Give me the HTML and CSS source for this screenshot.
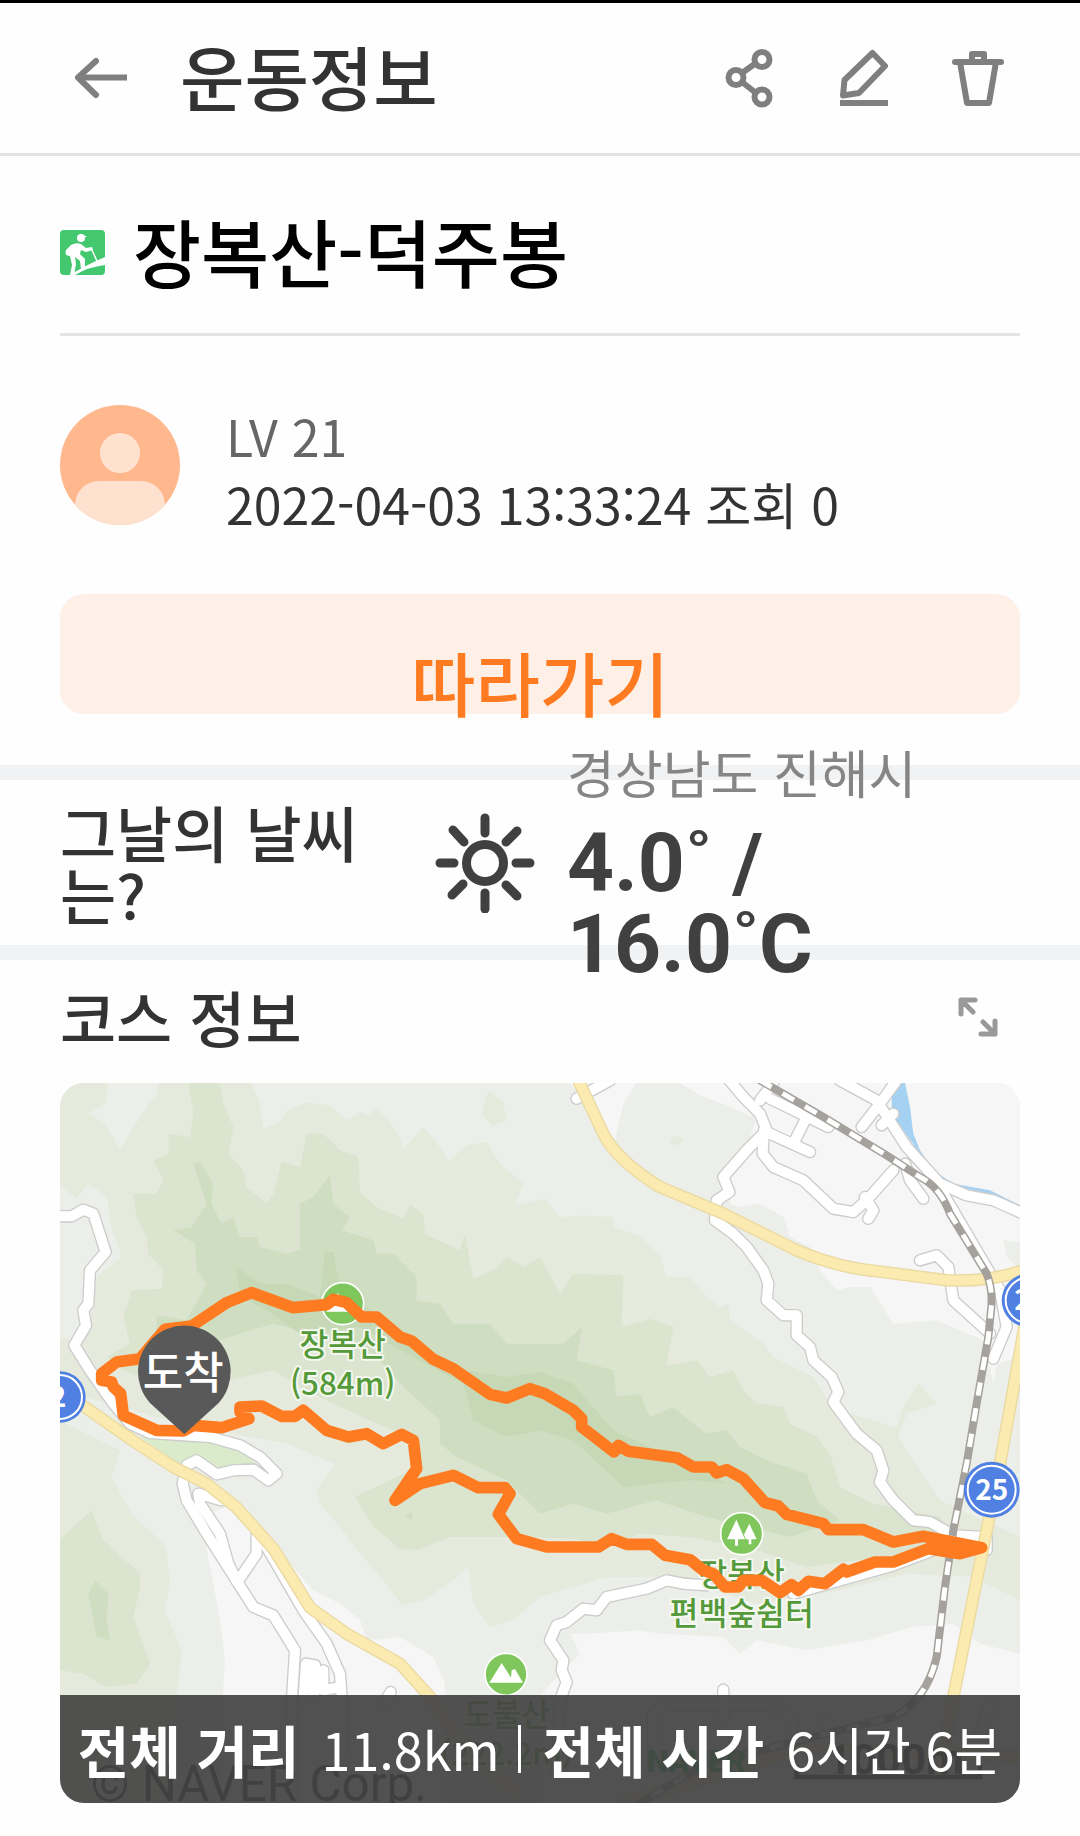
FILE: index.html
```html
<!DOCTYPE html>
<html lang="ko">
<head>
<meta charset="utf-8">
<meta name="viewport" content="width=device-width, initial-scale=1">
<title>운동정보</title>
<link rel="stylesheet" href="styles.css">
</head>
<body>
<header class="topbar">
  <button class="icon-button" type="button" aria-label="뒤로">
    <svg class="icon" viewBox="0 0 60 60"><path d="M24 13 6 29.500 24 47" stroke-linecap="round" stroke-linejoin="round"/><path d="M6 29.500H55"/></svg>
  </button>
  <h1 class="topbar-title">운동정보</h1>
  <div class="topbar-actions">
    <button class="icon-button" type="button" aria-label="공유">
      <svg class="icon" viewBox="0 0 60 60"><path d="M22 25 36 15M22 34 36 45"/><circle cx="16" cy="29.500" r="7.500"/><circle cx="42" cy="11.500" r="7.500"/><circle cx="42" cy="49" r="7.500"/></svg>
    </button>
    <button class="icon-button" type="button" aria-label="수정">
      <svg class="icon" viewBox="0 0 60 60"><path d="M38.500 5 51 18 25 45 9 47.500 10.500 32Z" stroke-linejoin="round"/><path d="M6 55H54"/></svg>
    </button>
    <button class="icon-button" type="button" aria-label="삭제">
      <svg class="icon" viewBox="0 0 60 60"><path d="M7 14H53" stroke-linecap="round"/><path d="M12 14 19 55H41L48 14M24 14V6H36V14" stroke-linejoin="round"/></svg>
    </button>
  </div>
</header>

<main>
  <section class="post">
    <div class="post-heading">
      <svg class="sport-icon" viewBox="0 0 45 45" aria-hidden="true">
        <rect width="45" height="45" rx="4" fill="#43c86f"/>
        <circle cx="21" cy="8" r="4" fill="#fff"/><path d="M20 4 27 6.500 24 8Z" fill="#fff"/>
        <path d="M11 15Q16 12 21 14L26 18 32 17 33 20 26 22 21 20 20 24 25 29 25 37 21 39 20 31 15 27 16 34 14 45 10 45 12 35 10 26Q4 26 6 20Z" fill="#fff"/>
        <path d="M31 18 37 31" stroke="#fff" stroke-width="1.500"/>
        <path d="M10 45Q24 36 45 27V35Q28 37 15 45Z" fill="#fff"/>
      </svg>
      <h2 class="post-title">장복산-덕주봉</h2>
    </div>
    <div class="author">
      <svg class="avatar" viewBox="0 0 120 120" aria-hidden="true">
        <defs><clipPath id="avatar-clip"><circle cx="60" cy="60" r="60"/></clipPath></defs>
        <g clip-path="url(#avatar-clip)"><rect width="120" height="120" fill="#ffb88d"/><circle cx="60" cy="48" r="20" fill="#ffe1cf"/><rect x="15" y="76" width="90" height="70" rx="24" fill="#ffe1cf"/></g>
      </svg>
      <div class="author-text">
        <p class="level">LV 21</p>
        <p class="meta">2022-04-03 13:33:24 조회 0</p>
      </div>
    </div>
    <button class="follow" type="button">따라가기</button>
  </section>

  <section class="weather">
    <h2 class="section-title weather-title">그날의 날씨는?</h2>
    <svg class="sun" viewBox="0 0 100 100" role="img" aria-label="맑음">
      <circle cx="50" cy="50" r="18.500"/>
      <path d="M50 5V20M50 80V96M5 50H19M81 50H95M18 17 29 29M82 18 71 29M17 82 28 71M82 83 71 72"/>
    </svg>
    <div class="forecast">
      <p class="place">경상남도 진해시</p>
      <p class="temperature">4.0˚ /<br>16.0˚C</p>
    </div>
  </section>

  <section class="course">
    <div class="course-head">
      <h2 class="section-title">코스 정보</h2>
      <button class="icon-button expand" type="button" aria-label="지도 확대">
        <svg class="icon-expand" viewBox="0 0 40 40"><path d="M3 17V3H17M3 3 15 15M37 24V37H23M37 37 25 25"/></svg>
      </button>
    </div>
    <div class="map">
      <svg class="map-art" viewBox="60 38 2880 2160" role="img" aria-label="코스 지도">
        <defs>
          <g id="streets">
            <path d="M40 438H95L130 418 160 430 197 545 150 600 145 700 130 720 138 765 103 825 150 900 220 1000 270 1060 330 1088 430 1095 510 1100 600 1125 660 1160 710 1210 685 1230 640 1198 580 1200 530 1212 470 1170 440 1185 428 1240 440 1290 500 1390 570 1500 640 1610 700 1635 765 1740 755 1900V2198"/>
            <path d="M545 1290 475 1270 480 1300 540 1390 565 1480 592 1535 650 1450V1390"/>
            <path d="M680 1430 790 1620 860 1720 900 1810 905 1880 905 2040M790 1890 798 1780 825 1785 822 1870 850 1800 850 1860 900 1850M1030 1900 1052 1865"/>
            <path d="M2060 20 2110 80 2160 130 2180 180 2120 240 2050 320 2068 365 2030 390 2025 450 2080 490 2120 530 2170 600 2185 640 2180 690 2230 735H2270V795L2310 830 2320 870 2375 920 2395 965 2380 995 2450 1090 2510 1140 2530 1200 2520 1235 2560 1290 2620 1350 2670 1355 2740 1395 2840 1400V1440"/>
            <path d="M2172 180 2168 250 2200 290 2290 330 2380 415 2440 425 2480 390 2560 300M2475 380 2500 420 2485 445M2190 190 2310 245M2265 210 2300 140M2190 85 2365 170M2160 90 2200 38"/>
            <path d="M2570 30 2520 100 2465 170M2400 30 2510 90 2600 230 2700 340 2780 375 2860 390 2950 430M2560 130 2525 165M2595 280 2610 330 2650 385M2710 370 2880 660 2900 770 2860 865M2640 570 2690 555 2725 590 2740 690 2850 790M1610 85 1710 30"/>
            <path d="M2000 1545 1930 1540 1880 1530 1820 1555 1700 1580 1670 1620 1630 1615 1580 1655 1550 1665 1530 1710 1570 1770 1565 1800 1580 1835 1560 1890 1550 2100M2260 1570 2400 1530 2560 1485 2680 1440M2050 1950V1858M1840 2100V1930L1880 1905H2200L2260 1960 2290 2090M2400 2100 2360 1950M2800 2050 2850 1900"/>
          </g>
          <g id="highways">
            <path d="M1610 20 1690 190Q1730 270 1860 350L2050 430 2270 540Q2400 595 2530 605L2720 630Q2850 635 2950 600"/>
            <path d="M120 1000 280 1112 400 1190 500 1240 590 1312 700 1435 810 1612 920 1690 1080 1780 1170 1880 1260 2010 1420 2160"/>
            <path d="M2955 760 2880 1180 2820 1480 2740 1880 2700 2110M1750 2198 2300 2030 2940 2060"/>
          </g>
        </defs>

        <!-- terrain -->
        <rect x="60" y="38" width="2880" height="2160" fill="#eceFe9"/>
        <path fill="#e6eadd" d="M60 38H205L195 100 145 130 190 155 220 200 240 240 275 180 320 110 350 70 355 38H635L660 100 670 175 720 155 740 120 800 97 870 105 920 150 960 125 985 135 1010 115 1050 155 1080 200 1090 235 1150 170 1190 215 1225 272 1280 225 1340 215 1380 280 1450 340 1425 405 1515 385 1560 440 1620 435 1720 440V470L1800 495 1860 555 1880 620 1950 620 2000 680 2040 710 2065 700 2070 750 2130 790 2170 820 2200 860 2320 920 2380 1010 2460 1040 2570 1070 2590 1010 2635 940 2690 1000 2600 1030 2575 1100 2620 1170 2700 1290 2940 1400V1590L2800 1520 2600 1510 2400 1560 2150 1600 1900 1520 1700 1520 1500 1580 1420 1650 1350 1670 1300 1600 1285 1490 1240 1530 1150 1590 1085 1605 1030 1530 960 1450 900 1370 840 1300 830 1260 885 1180 740 1120 420 1060 60 960Z"/>
        <path fill="#eceFe9" d="M60 345 110 385 145 340 200 380 215 480 245 560 170 620 160 720 100 810 60 800Z"/>
        <path fill="#e6eadd" d="M1345 60 1390 95 1400 150 1355 168 1325 130ZM1900 195 1930 205 1920 225 1890 220ZM60 1050 240 1140 215 1220 275 1330 380 1430 390 1540 375 1620 425 1740 410 1874 380 2198H60Z"/>
        <path fill="#dae4cf" d="M445 38H540L550 100 580 170 565 250 610 300 620 350 680 400 700 370 725 275 780 290 800 190 850 190 900 240 955 260 960 365 1010 410 1090 445 1110 405 1150 430 1155 490 1260 540 1275 490 1300 625 1360 600 1400 560 1450 590 1500 560 1560 670 1600 610 1750 615 1745 770 1830 745 1900 770 1880 885 1970 870 2010 920 2080 900 2110 960 2150 1000 2230 1010 2250 1060 2330 1100 2370 1150 2400 1250 2500 1300 2700 1340 2760 1430 2600 1450 2300 1490 2150 1440 1950 1400 1800 1390 1700 1430 1600 1405 1450 1400 1230 1400 1130 1440 1080 1435 1000 1370 945 1280 1050 1230 1130 1190 1100 1100 880 1000 780 950 700 900 560 930 400 960 250 900 200 860 270 820 250 740 275 660 365 655 370 600 325 550 320 500 290 440 280 370 350 370 370 330 340 270 385 250V190L450 200 460 130ZM60 1410 100 1370 155 1320 190 1410 300 1510V1550L280 1640 330 1780 290 1840 200 1850 130 1810 60 1800Z"/>
        <path fill="#cfdec1" d="M460 280 480 275 520 340 515 400 545 460 580 440 600 500 650 500 660 530 740 550 780 540V400L820 380 870 315 880 400 930 440 905 480 1000 510 1010 550 1060 550 1130 620V690L1200 700 1240 760 1350 760 1400 820 1500 820H1570L1625 770 1610 870 1720 900 1730 980 1800 970 1830 1040 1900 1010 1960 1060 2000 1090 2060 1080 2100 1130 2180 1170 2300 1210 2330 1290 2400 1350 2250 1400 2000 1340 1850 1290 1700 1330 1600 1300 1500 1330 1400 1230 1250 1160 1200 1120 1200 1050 1100 960 1000 850 850 800 700 760 600 790 480 830 350 790 350 735 440 750 500 640 470 600 465 520 400 480 455 470 500 400ZM145 1570 165 1530 205 1570 200 1650 210 1710 170 1700ZM1095 1340 1117 1325V1350Z"/>
        <path fill="#c6d8b6" d="M590 590 660 640 740 640 840 680 855 545H880L900 650 960 690 1050 780 1130 820 1280 900 1400 920 1500 905 1600 940 1650 1000 1720 1080 1850 1140 1950 1180 2060 1240 1950 1230 1750 1250 1600 1110 1500 1080 1400 1100 1300 1050 1270 940 1100 850 960 770 780 790 680 720 600 680Z"/>
        <path fill="#d9ebcb" d="M300 1100 430 1105 500 1098 600 1140 660 1190 600 1190 530 1205 470 1165 430 1190Z"/>
        <!-- built-up areas -->
        <path fill="#f6f6f6" d="M1590 38H1790L1750 100 1725 210 1680 150ZM1920 38 1980 75 2060 105 2150 145 2120 230 2050 310 2070 400 2100 410 2160 400 2230 440 2250 500 2310 530 2340 600 2390 660 2430 650 2490 650 2560 760 2690 750 2830 810 2860 940 2870 880 2940 860V38ZM1500 2198V1874L1620 1750 1590 1690 1640 1690 1800 1680 1860 1690 2050 1700 2100 1750 2150 1710 2300 1740 2480 1710 2620 1670 2740 1660 2820 1720 2940 1750V2198ZM480 1340 560 1310 680 1400 820 1560 900 1600 960 1650 980 1710 1080 1700 1180 1760 1215 1840 1210 2198H530L555 1770 540 1650 520 1540Z"/>
        <path fill="#eceFe9" d="M2890 510 2940 515V600L2900 560Z"/>
        <path fill="#a5d2f2" d="M2595 38H2585L2555 80V130L2640 250 2720 345 2800 360 2860 385 2940 420V405L2850 360 2740 340 2680 300 2640 240 2620 190 2610 110Z"/>

        <!-- roads -->
        <use href="#streets" class="line street-edge"/>
        <use href="#streets" class="line street"/>
        <use href="#highways" class="line highway-edge"/>
        <use href="#highways" class="line highway"/>
        <path class="line rail-edge" d="M2160 30 2350 140 2540 255 2640 320Q2700 350 2730 430L2840 610Q2860 660 2853 720L2845 800 2810 1000 2780 1180 2740 1380 2715 1550 2690 1760Q2660 1890 2560 1940L2400 1980 2000 2080 1800 2198"/>
        <path class="line rail" d="M2160 30 2350 140 2540 255 2640 320Q2700 350 2730 430L2840 610Q2860 660 2853 720L2845 800 2810 1000 2780 1180 2740 1380 2715 1550 2690 1760Q2660 1890 2560 1940L2400 1980 2000 2080 1800 2198"/>

        <!-- route number shields -->
        <g class="shield"><circle cx="60" cy="980" r="77"/><circle class="ring" cx="60" cy="980" r="66"/><text x="54" y="1010">2</text></g>
        <g class="shield"><circle cx="2965" cy="690" r="80"/><circle class="ring" cx="2965" cy="690" r="68"/><text x="2972" y="720">25</text></g>
        <g class="shield"><circle cx="2855" cy="1258" r="84"/><circle class="ring" cx="2855" cy="1258" r="72"/><text x="2855" y="1290">25</text></g>

        <!-- places -->
        <g class="place-dot">
          <circle cx="908" cy="700" r="63"/><path d="M858 724 893 668 918 700 928 688 958 724Z"/>
          <circle cx="1398" cy="1812" r="63"/><path d="M1348 1837 1385 1778 1413 1822 1415 1800 1425 1796 1449 1837Z"/>
          <circle cx="2105" cy="1390" r="63"/><path d="M2089 1348 2115 1407H2094V1426H2085V1407H2061ZM2128 1360 2150 1407H2134V1422H2126V1407H2118L2112 1393Z"/>
        </g>
        <g class="place-name">
          <text x="908" y="858">장복산</text><text x="908" y="974">(584m)</text>
          <text x="1400" y="1968">도불산</text><text x="1400" y="2084">(222.2m)</text>
          <text x="2105" y="1546">장복산</text><text x="2105" y="1664">편백숲쉼터</text>
        </g>
        <text class="copyright" x="152" y="2192">© NAVER Corp.</text>
        <text class="brand" x="1820" y="2106">NAVER</text>
        <text class="scale-text" x="2360" y="2110">1000m</text>
        <path d="M2270 2085V2120H2820V2085" fill="none" stroke="#111" stroke-width="14"/>

        <!-- recorded track -->
        <path class="line track" d="M430 1082 350 1080 250 1035 242 970 220 950 215 935 185 930V910L230 875 300 865 375 777 455 767 560 697 635 667 760 712 860 703 880 687 920 697 965 740H1010L1080 800 1115 812 1180 867 1240 895 1350 972 1400 983 1470 955 1515 970 1600 1020 1625 1045V1070L1722 1145 1735 1125 1765 1143 1910 1162 1960 1190H2015L2030 1208 2060 1198 2110 1225 2175 1297 2215 1307 2240 1332 2350 1360 2365 1378H2470L2560 1415 2650 1398 2825 1432 2760 1450 2665 1435 2560 1475H2505L2420 1505 2410 1497 2355 1540 2305 1533 2275 1560 2255 1543 2220 1567 2165 1530H2110L2095 1550H2055L2020 1510 1990 1500 1950 1468 1875 1455 1835 1422H1760L1715 1405 1675 1430H1520L1430 1405 1375 1332 1410 1270 1395 1252H1315L1240 1215 1140 1240 1065 1290 1130 1195 1120 1110 1085 1092 1030 1120 980 1090 925 1100 860 1080 790 1020 765 1038H725L665 1007 600 1010V1025L627 1045 545 1072 460 1065Z"/>
        <path d="M433 1092 330 998A139 139 0 1 1 536 998Z" fill="#595959"/>
        <text class="pin-text" x="430" y="955">도착</text>
      </svg>
      <dl class="summary">
        <div class="stat"><dt>전체 거리</dt><dd>11.8km</dd></div>
        <div class="stat"><dt>전체 시간</dt><dd>6시간 6분</dd></div>
      </dl>
    </div>
  </section>
</main>
</body>
</html>
```
FILE: styles.css
```css
* {
  box-sizing: border-box;
}

body {
  margin: 0;
  border-top: 3px solid #000;
  background: #fefefe;
  color: #333;
  font-family: "Noto Sans CJK KR", sans-serif;
}

h1,
h2,
p,
dl,
dd {
  margin: 0;
}

button {
  border: 0;
  padding: 0;
  background: none;
  font-family: inherit;
  cursor: pointer;
}

svg {
  display: block;
}

/* top bar */
.topbar {
  display: flex;
  align-items: center;
  gap: 48px;
  height: 153px;
  padding: 0 72px;
  border-bottom: 3px solid #e2e2e2;
}

.topbar-title {
  flex: 1;
  padding-bottom: 4px;
  font-size: 70px;
  font-weight: 500;
  line-height: 80px;
}

.topbar-actions {
  display: flex;
  gap: 54px;
}

.icon {
  width: 60px;
  height: 60px;
  fill: none;
  stroke: #7f7f7f;
  stroke-width: 6;
}

/* post */
.post {
  padding: 0 60px 51px;
}

.post-heading {
  display: flex;
  align-items: center;
  gap: 28px;
  height: 180px;
  padding-top: 16px;
  border-bottom: 3px solid #e4e4e4;
}

.sport-icon {
  width: 45px;
  height: 45px;
}

.post-title {
  padding-bottom: 6px;
  color: #000;
  font-size: 74px;
  font-weight: 500;
  line-height: 80px;
}

.author {
  display: flex;
  align-items: center;
  gap: 46px;
  height: 258px;
}

.avatar {
  width: 120px;
  height: 120px;
}

.author-text {
  padding-top: 8px;
  font-size: 50px;
  line-height: 68px;
}

.level {
  color: #666;
}

.follow {
  display: block;
  width: 100%;
  height: 120px;
  padding-top: 56px;
  border-radius: 24px;
  background: #fff0e7;
  color: #ff7b22;
  font-size: 70px;
  font-weight: 500;
  line-height: 64px;
}

.section-title {
  font-size: 61px;
  font-weight: 500;
  line-height: 62px;
}

/* weather */
.weather {
  display: flex;
  align-items: center;
  height: 195px;
  padding: 0 60px;
  border-top: 15px solid #f1f2f4;
  border-bottom: 15px solid #f1f2f4;
}

.weather-title {
  width: 320px;
  margin-right: 55px;
  word-break: break-all;
}

.sun {
  flex: none;
  width: 100px;
  height: 100px;
  margin-right: 32px;
  fill: none;
  stroke: #404040;
  stroke-width: 9;
  stroke-linecap: round;
}

.forecast {
  padding-bottom: 10px;
}

.place {
  margin-bottom: 10px;
  color: #858585;
  font-size: 52px;
  line-height: 82px;
}

.temperature {
  color: #404040;
  font-family: Roboto, sans-serif;
  font-size: 82px;
  font-weight: 700;
  line-height: 81px;
}

/* course */
.course {
  padding: 0 60px 34px;
}

.course-head {
  display: flex;
  align-items: center;
  justify-content: space-between;
  height: 123px;
  padding: 0 22px 10px 0;
}

.icon-expand {
  width: 40px;
  height: 40px;
  fill: none;
  stroke: #999;
  stroke-width: 5;
  stroke-linecap: round;
  stroke-linejoin: round;
}

.map {
  position: relative;
  overflow: hidden;
  border-radius: 24px;
}

.map-art {
  width: 100%;
}

.line {
  fill: none;
  stroke-linecap: round;
  stroke-linejoin: round;
}

.street-edge {
  stroke: #cccccc;
  stroke-width: 38;
}

.street {
  stroke: #fff;
  stroke-width: 30;
}

.highway-edge {
  stroke: #ead9a2;
  stroke-width: 38;
}

.highway {
  stroke: #fbebb0;
  stroke-width: 30;
}

.rail-edge {
  stroke: #a5a19c;
  stroke-width: 24;
}

.rail {
  stroke: #fff;
  stroke-width: 15;
  stroke-dasharray: 40 38;
  stroke-linecap: butt;
}

.track {
  stroke: #ff7b22;
  stroke-width: 35;
}

.shield {
  fill: #5080e2;
}

.shield .ring {
  fill: none;
  stroke: #fff;
  stroke-width: 6;
}

.shield text {
  fill: #fff;
  font-size: 84px;
  font-weight: 700;
  text-anchor: middle;
}

.place-dot circle {
  fill: #7fc65c;
  stroke: #fff;
  stroke-width: 5;
}

.place-dot path {
  fill: #fff;
}

.place-name {
  fill: #559a3a;
  stroke: #f5f8f0;
  stroke-width: 12;
  stroke-linejoin: round;
  paint-order: stroke;
  font-size: 94px;
  font-weight: 500;
  text-anchor: middle;
}

.copyright {
  fill: #111;
  font-family: Roboto, sans-serif;
  font-size: 148px;
}

.brand {
  fill: #03a63c;
  font-family: Roboto, sans-serif;
  font-size: 92px;
  font-weight: 900;
}

.scale-text {
  fill: #111;
  font-family: Roboto, sans-serif;
  font-size: 130px;
  font-weight: 700;
}

.pin-text {
  fill: #fff;
  font-size: 132px;
  font-weight: 500;
  text-anchor: middle;
}

.summary {
  position: absolute;
  right: 0;
  bottom: 0;
  left: 0;
  display: flex;
  align-items: center;
  justify-content: center;
  height: 108px;
  background: rgba(68, 68, 68, 0.93);
  color: #fff;
  line-height: 60px;
  white-space: nowrap;
}

.stat {
  display: flex;
  align-items: center;
  gap: 22px;
}

.stat + .stat::before {
  width: 3px;
  height: 48px;
  margin-left: 18px;
  background: #fff;
  content: "";
}

.stat dt {
  font-size: 56px;
  font-weight: 700;
}

.stat dd {
  font-size: 52px;
}
```
